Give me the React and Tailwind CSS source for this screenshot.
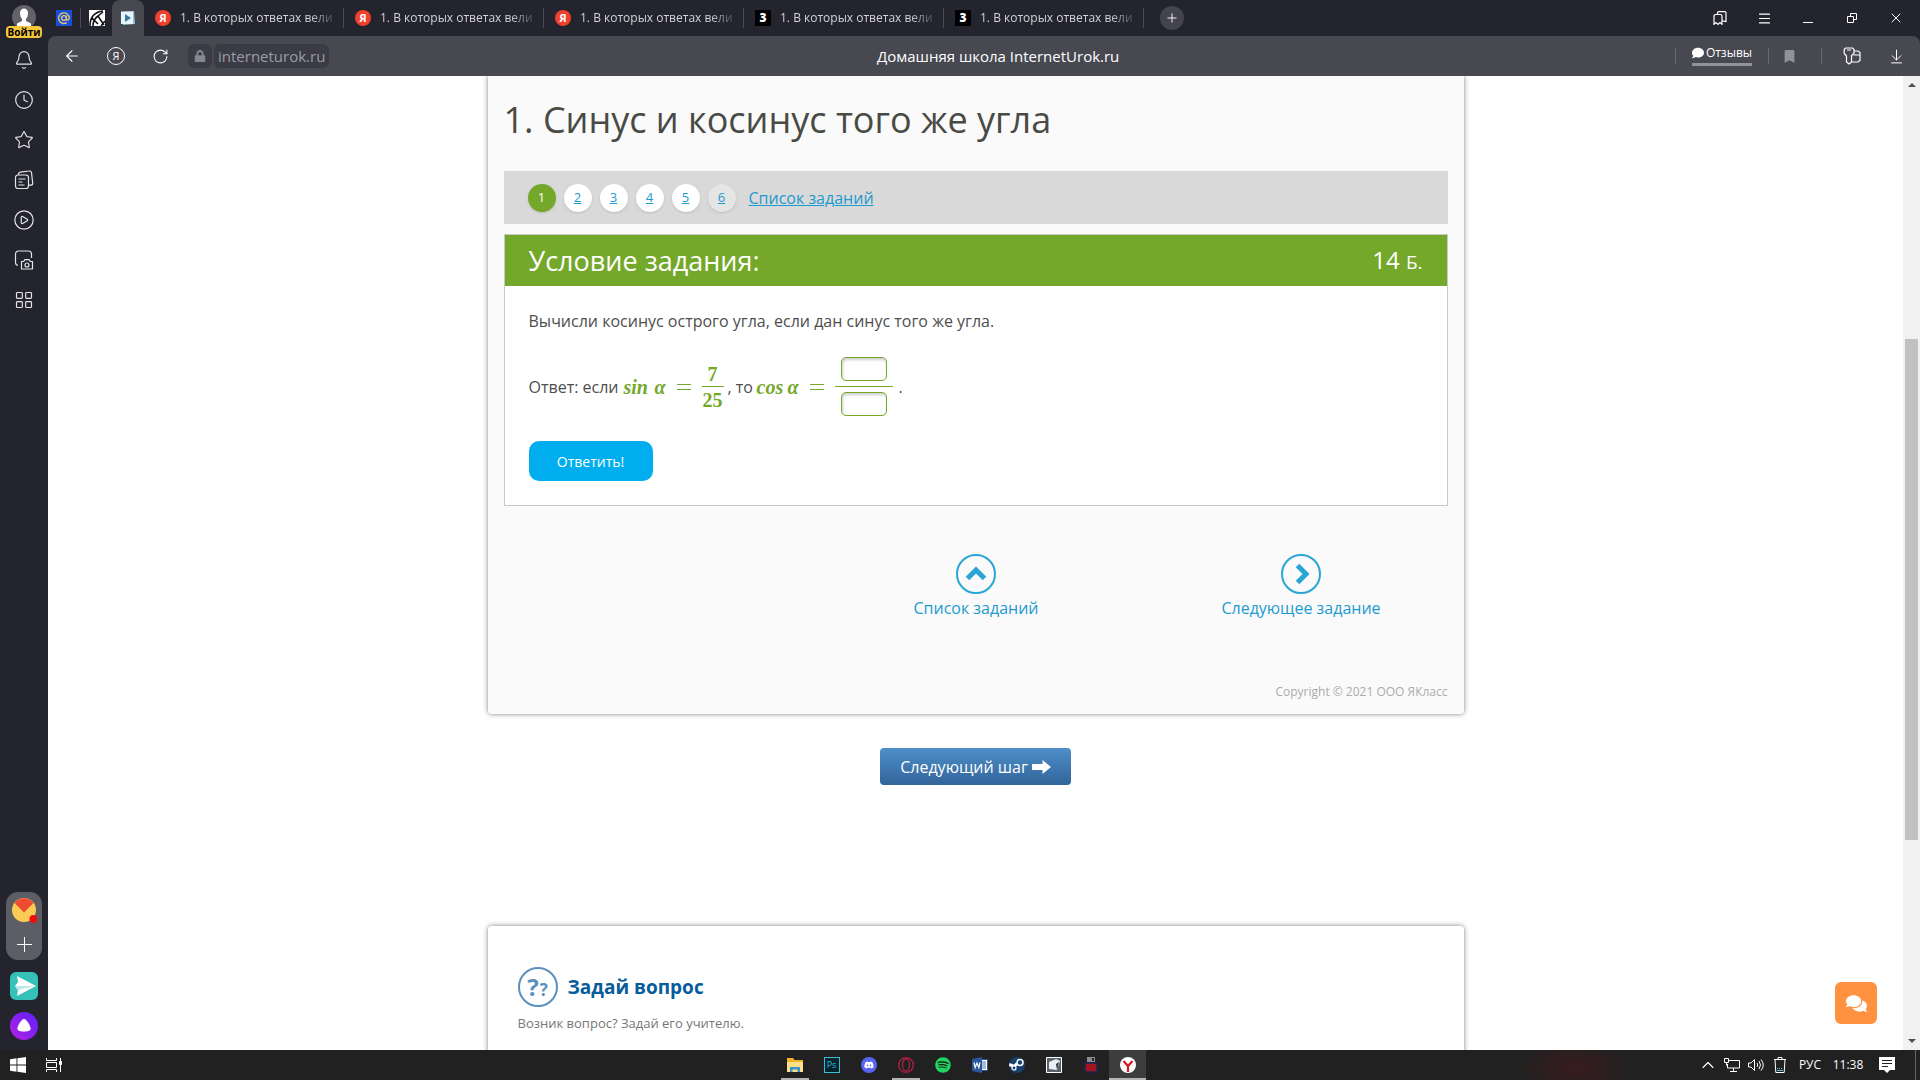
import {
  ArrowDownToLine,
  ArrowLeft,
  Bell,
  ChevronUp,
  CirclePlay,
  Clock,
  LayoutGrid,
  Menu,
  Plus,
  RotateCw,
  Star,
  X,
} from "lucide-react";
import { FaBookmark, FaComment, FaComments, FaDiscord, FaLock, FaOpera, FaSpotify, FaSteam } from "react-icons/fa";

const tabs = [
  { id: 1, kind: "yandex" },
  { id: 2, kind: "yandex" },
  { id: 3, kind: "yandex" },
  { id: 4, kind: "znanija" },
  { id: 5, kind: "znanija" },
];

// Browser side panel icons
const NotesIcon = () => (
  <svg viewBox="0 0 20 20" className="size-5" fill="none" stroke="currentColor" strokeWidth="1.2">
    <rect x="1.5" y="5" width="13" height="13.5" rx="2.5" />
    <path d="M4.5 5V4a2 2 0 0 1 1.700-1.800l9-1.200a2 2 0 0 1 2.300 1.700l1.200 10.300a2 2 0 0 1-1.700 2.200H14.500M4.500 9h7M4.500 12h4M4.500 15h6" />
  </svg>
);

const ScreenshotIcon = () => (
  <svg viewBox="0 0 20 20" className="size-5" fill="none" stroke="currentColor" strokeWidth="1.2">
    <path d="M4 15.5a3 3 0 0 1-2.5-3V4a3 3 0 0 1 3-3h10a3 3 0 0 1 3 3v4" />
    <path d="M7.5 11.5h2.2l1.2-1.8h4.2l1.2 1.8h2.2v7.5h-11z" strokeLinejoin="round" />
    <circle cx="13" cy="15" r="2" />
  </svg>
);

const sideItems = [
  { label: "Уведомления", icon: <Bell size={20} strokeWidth={1.4} /> },
  { label: "История", icon: <Clock size={20} strokeWidth={1.4} /> },
  { label: "Избранное", icon: <Star size={20} strokeWidth={1.4} /> },
  { label: "Коллекции", icon: <NotesIcon /> },
  { label: "Видео", icon: <CirclePlay size={22} strokeWidth={1.3} /> },
  { label: "Скриншот", icon: <ScreenshotIcon /> },
  { label: "Сервисы", icon: <LayoutGrid size={20} strokeWidth={1.4} /> },
];

const YandexBadge = () => (
  <span className="flex size-4 shrink-0 items-center justify-center rounded-full bg-[#f0402d] text-[11px] font-bold leading-4 text-white">
    Я
  </span>
);

const ZnanijaBadge = () => (
  <span className="flex size-4 shrink-0 items-center justify-center bg-black text-[12px] font-extrabold leading-4 text-white">
    3
  </span>
);

const BrowserTab = ({ kind }) => (
  <button className="flex h-9 w-[200px] items-center pl-[11px]">
    {kind === "yandex" ? <YandexBadge /> : <ZnanijaBadge />}
    <span className="ml-[9px] whitespace-nowrap text-left text-[12px] leading-5 text-[#d3d3d8] [mask-image:linear-gradient(to_right,black_85%,#0003)]">
      1. В которых ответах вели
    </span>
    <span className="ml-auto h-5 w-px bg-[#4a4b55]" />
  </button>
);

const TabBar = () => (
  <div className="flex h-9 shrink-0 items-center bg-[#23242e] text-white">
    <button className="flex h-9 w-8 items-center justify-center" aria-label="Почта">
      <svg viewBox="0 0 16 16" className="size-4">
        <rect width="16" height="16" fill="#1550d8" />
        <g fill="none" stroke="#e8c06a" strokeWidth="1.4">
          <circle cx="8" cy="8" r="2.4" />
          <path d="M10.4 5.6v3.2c0 2 2.8 1.8 2.8-.8a5.3 5.3 0 1 0-2.4 4.6" />
        </g>
      </svg>
    </button>
    <span className="h-5 w-px bg-[#4a4b55]" />
    <button className="flex h-9 w-[31px] items-center justify-center" aria-label="Школа">
      <svg viewBox="0 0 16 16" className="size-4">
        <rect width="16" height="16" fill="#fff" />
        <path d="M1 16C1 8 5 2 14 1M4 16c0-5 2-8 5-10l6 9M9 6l5-4M3 8l6 6M12 16l4-5" stroke="#111" strokeWidth="1.6" fill="none" />
      </svg>
    </button>
    <button className="flex h-9 w-8 items-center justify-center rounded-t-lg bg-[#474850]" aria-label="Домашняя школа">
      <svg viewBox="0 0 16 16" className="size-4">
        <path d="m2 2 12-1 1 13-12 1z" fill="#8cc3dd" />
        <path d="M1 1.5h12v12.5H1z" fill="#e6f3fa" />
        <path d="m5 4 6 4-6 4z" fill="#39789b" />
      </svg>
    </button>
    {tabs.map((tab) => (
      <BrowserTab key={tab.id} kind={tab.kind} />
    ))}
    <button className="ml-4 flex size-6 items-center justify-center rounded-full bg-[#43444d]" aria-label="Новая вкладка">
      <Plus size={14} strokeWidth={1.6} />
    </button>
    <div className="mr-[2px] ml-auto flex">
      <button className="flex h-9 w-11 items-center justify-center" aria-label="Закладки">
        <svg viewBox="0 0 14 14" className="size-[14px]" fill="none" stroke="currentColor" strokeWidth="1.2">
          <path d="M1 13.4V5.2A1.7 1.7 0 0 1 2.7 3.5h4.6A1.7 1.7 0 0 1 9 5.2v8.2l-2-1.8-2 1.8-2-1.8z" />
          <path d="M4.5 3.4V2A1.4 1.4 0 0 1 5.900.6h5.700A1.400 1.400 0 0 1 13 2v8.500L9 9.800" />
        </svg>
      </button>
      <button className="flex h-9 w-11 items-center justify-center" aria-label="Меню">
        <Menu size={15} strokeWidth={1.8} />
      </button>
      <button className="flex h-9 w-11 items-center justify-center" aria-label="Свернуть">
        <svg viewBox="0 0 10 10" className="size-[10px]"><path d="M0 9.5h10" stroke="currentColor" /></svg>
      </button>
      <button className="flex h-9 w-11 items-center justify-center" aria-label="Развернуть">
        <svg viewBox="0 0 10 10" className="size-[10px]" fill="none" stroke="currentColor">
          <path d="M.5 3.500h6v6h-6zM3.500 3.500v-3h6v6h-3" />
        </svg>
      </button>
      <button className="flex h-9 w-11 items-center justify-center" aria-label="Закрыть">
        <X size={16} strokeWidth={1.5} />
      </button>
    </div>
  </div>
);

const Toolbar = () => (
  <div className="bg-[#23242e]">
    <div className="flex h-10 items-center rounded-t-lg bg-[#474850] text-white">
      <button className="flex w-12 justify-center" aria-label="Назад">
        <ArrowLeft size={18} strokeWidth={1.5} />
      </button>
      <button className="flex w-10 justify-center" aria-label="Яндекс">
        <span className="flex size-[18px] items-center justify-center rounded-full border border-white text-[11px] leading-4">Я</span>
      </button>
      <button className="flex w-12 justify-center" aria-label="Обновить">
        <RotateCw size={17} strokeWidth={1.5} />
      </button>
      <span className="ml-1 flex h-6 w-6 items-center justify-center rounded-md bg-[#3a3b45] text-[#85868e]">
        <FaLock size={12} />
      </span>
      <a href="#" className="ml-[2px] flex h-6 items-center rounded-md bg-[#3a3b45] px-1 text-[15px] leading-6 text-[#9a9ba3]">
        interneturok.ru
      </a>
      <span className="flex-1 pr-2 text-center text-[15px] leading-6">Домашняя школа InternetUrok.ru</span>
      <div className="flex items-center">
        <span className="h-4 w-px bg-[#666770]" />
        <a href="#" className="mx-4 mb-1 flex items-center gap-[2px] border-b-3 border-[#92939a] text-[12px] leading-5">
          <FaComment size={12} />
          Отзывы
        </a>
        <span className="h-4 w-px bg-[#666770]" />
        <button className="mr-5 ml-2 flex w-6 justify-center text-[#92939a]" aria-label="В закладки">
          <FaBookmark size={13} />
        </button>
        <span className="h-4 w-px bg-[#666770]" />
        <button className="ml-2 flex w-11 justify-center" aria-label="Пароли">
          <svg viewBox="0 0 18 18" className="size-[18px]" fill="none" stroke="currentColor" strokeWidth="1.2">
            <path d="M3 8.500 1.200 6.500v-4L2.500 1h7L11 2.500v4L8.500 8.500V15L6 17l-2.500-2v-6zM4 3h4" />
            <path d="M11 4h4l2 1.500v8L15 15H9M10.500 8h6.500" />
          </svg>
        </button>
        <button className="mr-[2px] flex w-11 justify-center" aria-label="Загрузки">
          <ArrowDownToLine size={17} strokeWidth={1.4} />
        </button>
      </div>
    </div>
  </div>
);

const Sidebar = () => (
  <aside className="flex w-12 shrink-0 flex-col items-center bg-[#23242e] text-[#e4e4e8]">
    <button className="flex h-10 flex-col items-center pt-[5px]">
      <svg viewBox="0 0 24 24" className="size-6">
        <circle cx="12" cy="12" r="12" fill="#626268" />
        <path d="M8 8c0-6 8-6 8 0 0 3-1 5-2 6v2l5 2.500v2.700a12 12 0 0 1-14 0v-2.700L10 16v-2c-1-1-2-3-2-6z" fill="#fff" />
      </svg>
      <span className="z-10 -mt-[3px] rounded-sm bg-[#f5c63c] px-[2px] text-[10px] font-bold leading-3 text-black">Войти</span>
    </button>
    {sideItems.map((item) => (
      <button key={item.label} className="flex h-10 w-12 items-center justify-center" aria-label={item.label}>
        {item.icon}
      </button>
    ))}
    <div className="mt-auto flex h-[68px] w-9 flex-col items-center justify-between rounded-xl bg-[#5c5d65] pt-[6px] pb-2">
      <button aria-label="Яндекс Почта">
        <svg viewBox="0 0 26 26" className="size-[26px]">
          <circle cx="13" cy="12" r="12" fill="#fccb53" />
          <path d="M3.500 5a12 12 0 0 1 19 0L13 14.500z" fill="#ee4b35" />
          <circle cx="22.500" cy="21" r="4" fill="#f40c0c" />
        </svg>
      </button>
      <button aria-label="Добавить">
        <svg viewBox="0 0 16 16" className="size-4" stroke="#fff">
          <path d="M8.500 1v15M1 8.500h15" />
        </svg>
      </button>
    </div>
    <button className="mt-3" aria-label="Мессенджер">
      <svg viewBox="0 0 28 28" className="size-7">
        <rect width="28" height="28" rx="6" fill="#35c1b8" />
        <path d="m7 4 19 10L7 24l1-6-3-4 3-4z" fill="#fff" />
        <path d="m5 14 21 0L8 18z" fill="#bfe9e6" />
      </svg>
    </button>
    <button className="mt-3 mb-[10px]" aria-label="Алиса">
      <svg viewBox="0 0 28 28" className="size-7">
        <defs>
          <linearGradient id="alice" x1="0" y1="1" x2="1" y2="0">
            <stop stopColor="#b620e8" />
            <stop offset="1" stopColor="#5a22f5" />
          </linearGradient>
        </defs>
        <circle cx="14" cy="14" r="14" fill="url(#alice)" />
        <path d="M14 7c2 0 3.500 2.500 5.500 6 2 4 2 6.500-5.500 6.500S6.500 17 8.500 13c2-3.500 3.500-6 5.500-6z" fill="#fff" />
      </svg>
    </button>
  </aside>
);

const Steps = () => (
  <nav className="flex h-[53px] items-center gap-2 bg-[#d9d9d9] px-6 text-[#1d9ad0]">
    <span className="flex size-7 items-center justify-center rounded-full bg-[#74a82a] text-[13px] text-white shadow-sm">1</span>
    {[2, 3, 4, 5].map((n) => (
      <a key={n} href="#" className="flex size-7 items-center justify-center rounded-full bg-white text-[13px] underline shadow-sm">
        {n}
      </a>
    ))}
    <a href="#" className="flex size-7 items-center justify-center rounded-full bg-[#e5e5e5] text-[13px] underline shadow-sm">
      6
    </a>
    <a href="#" className="ml-[5px] text-[16px] leading-6 underline">
      Список заданий
    </a>
  </nav>
);

const answerInput =
  "block h-6 w-[46px] rounded-[5px] border border-[#74a82a] bg-white px-1 text-center text-sm shadow-[inset_1px_2px_3px_rgba(0,0,0,0.2)] outline-none";

const Func = ({ name }) => (
  <span className="flex w-[78px] items-center whitespace-nowrap font-['Liberation_Serif'] text-[20px] leading-6 text-[#74a82a]">
    <i className="w-[31px] font-bold">{name}</i>
    <i className="w-[22px] font-bold">α</i>
    <svg viewBox="0 0 14 6" className="h-[6px] w-[14px]" stroke="currentColor">
      <path d="M0 .5h14M0 5.500h14" />
    </svg>
  </span>
);

const Formula = () => (
  <div className="mt-6 flex items-center text-[16px] leading-6 text-[#4e4e4e]">
    <span className="w-[95px] whitespace-nowrap">Ответ: если</span>
    <Func name="sin" />
    <span className="w-[22px] text-center font-['Liberation_Serif'] text-[20px] font-bold leading-6 text-[#74a82a]">
      <span className="block">7</span>
      <span className="block border-t border-[#74a82a] pt-px">25</span>
    </span>
    <span className="w-[33px] pl-1 whitespace-nowrap">, то</span>
    <Func name="cos" />
    <span className="flex w-[58px] flex-col items-center">
      <input aria-label="Числитель" className={answerInput} />
      <span className="my-[5px] h-px w-full bg-[#74a82a]" />
      <input aria-label="Знаменатель" className={answerInput} />
    </span>
    <span className="pl-[6px]">.</span>
  </div>
);

const Task = () => (
  <section className="mt-[10px] border border-[#c8c8c8] bg-white">
    <header className="flex h-[51px] items-center justify-between bg-[#74a82a] px-6 text-white">
      <h2 className="text-[27px] leading-9">Условие задания:</h2>
      <span className="text-[24px] leading-9">
        14 <span className="text-[19px]">Б.</span>
      </span>
    </header>
    <div className="px-6 pt-[23px] pb-6">
      <p className="text-[16px] leading-6 text-[#4e4e4e]">Вычисли косинус острого угла, если дан синус того же угла.</p>
      <Formula />
      <button className="mt-[25px] h-10 w-[124px] rounded-[10px] bg-[#00aeef] text-[14px] text-white">Ответить!</button>
    </div>
  </section>
);

const TaskNav = () => (
  <div className="mt-12 grid grid-cols-[310px_325px_325px] text-[16px] leading-6 text-[#1d9ad0]">
    <a href="#" className="col-start-2 flex flex-col items-center gap-[2px]">
      <svg viewBox="0 0 40 40" className="size-10" fill="none" stroke="#29a5d6">
        <circle cx="20" cy="20" r="19" strokeWidth="2" />
        <path d="m11.500 24.500 8.500-8.500 8.500 8.500" strokeWidth="5" />
      </svg>
      Список заданий
    </a>
    <a href="#" className="flex flex-col items-center gap-[2px]">
      <svg viewBox="0 0 40 40" className="size-10" fill="none" stroke="#29a5d6">
        <circle cx="20" cy="20" r="19" strokeWidth="2" />
        <path d="m16.500 11.500 8.500 8.500-8.500 8.500" strokeWidth="5" />
      </svg>
      Следующее задание
    </a>
  </div>
);

const Page = () => (
  <main className="min-w-0 flex-1 overflow-hidden bg-white">
    <article className="mx-auto w-full max-w-[976px] rounded-b-sm bg-[#fafafa] px-4 pt-5 pb-[10px] shadow-[0_0_5px_rgba(0,0,0,0.5)]">
      <h1 className="text-[36px] leading-12 text-[#4a4a45]">1. Синус и косинус того же угла</h1>
      <div className="mt-[27px]">
        <Steps />
      </div>
      <Task />
      <TaskNav />
      <p className="mt-[60px] text-right text-[12px] leading-6 text-[#ababab]">Copyright © 2021 ООО ЯКласс</p>
    </article>

    <div className="mt-[34px] flex justify-center">
      <button className="flex h-[37px] items-center gap-1 rounded-[4px] bg-linear-to-b from-[#4f8fc9] to-[#31659a] px-5 text-[16px] leading-6 text-white">
        Следующий шаг
        <svg viewBox="0 0 19 16" className="h-4 w-[19px]" fill="currentColor">
          <path d="M0 5h10.500V1L19 8l-8.500 7v-4H0z" />
        </svg>
      </button>
    </div>

    <section className="mx-auto mt-[141px] h-60 w-full max-w-[976px] rounded-sm bg-white px-[30px] pt-[41px] shadow-[0_0_5px_rgba(0,0,0,0.5)]">
      <div className="flex items-center gap-[10px]">
        <span className="flex size-10 items-center justify-center gap-px rounded-full border-2 border-[#5b8fbd] font-bold text-[#5b8fbd]">
          <span className="text-[24px] leading-6">?</span>
          <span className="pt-[6px] text-[17px] leading-4">?</span>
        </span>
        <h2 className="text-[19px] font-bold leading-8 text-[#075c9c]">Задай вопрос</h2>
      </div>
      <p className="mt-1 text-[13px] leading-6 text-[#777]">Возник вопрос? Задай его учителю.</p>
    </section>
  </main>
);

const Scrollbar = () => (
  <div className="flex w-[17px] shrink-0 flex-col items-center bg-[#f1f1f1] py-[7px]">
    <svg viewBox="0 0 8 4" className="h-1 w-2"><path d="M0 4 4 0l4 4z" fill="#505050" /></svg>
    <div className="flex w-full flex-1 flex-col items-center">
      <div className="flex-[252]" />
      <div className="w-[13px] flex-[501] bg-[#c1c1c1]" />
      <div className="flex-[199]" />
    </div>
    <svg viewBox="0 0 8 4" className="h-1 w-2"><path d="m0 0 4 4 4-4z" fill="#505050" /></svg>
  </div>
);

const apps = [
  {
    name: "Проводник",
    open: true,
    icon: (
      <svg viewBox="0 0 16 14" className="h-[14px] w-4">
        <path d="M0 0h6l1.500 2H16v12H0z" fill="#f0b429" />
        <path d="M0 4h16v10H0z" fill="#ffdf87" />
        <path d="M3 14V9h10v5h-2.500v-2.500h-5V14z" fill="#3b93c9" />
      </svg>
    ),
  },
  {
    name: "Photoshop",
    icon: (
      <span className="flex size-4 items-center justify-center border border-[#35bdd9] bg-[#06232d] text-[9px] leading-3 text-[#35bdd9]">
        Ps
      </span>
    ),
  },
  {
    name: "Discord",
    icon: (
      <span className="flex size-4 items-center justify-center rounded-full bg-[#5865f2] text-white">
        <FaDiscord size={10} />
      </span>
    ),
  },
  {
    name: "Opera",
    open: true,
    icon: (
      <svg viewBox="0 0 16 16" className="size-4" fill="none" stroke="#a8213f">
        <circle cx="8" cy="8" r="7.300" strokeWidth="1.400" />
        <ellipse cx="8" cy="8" rx="3.500" ry="6" strokeWidth="1.400" />
      </svg>
    ),
  },
  { name: "Spotify", icon: <FaSpotify size={16} className="text-[#1ed760]" /> },
  {
    name: "Word",
    icon: (
      <svg viewBox="0 0 16 16" className="size-4">
        <path d="M8 2.500h7.500v11H8z" fill="#fff" stroke="#2b579a" />
        <path d="M10 5h4M10 7h4M10 9h4M10 11h4" stroke="#2b579a" strokeWidth=".8" />
        <path d="m0 2 10-2v16L0 14z" fill="#2b579a" />
        <path d="m2 5.500 1.200 5L5 6l1.800 4.500L8 5.500" fill="none" stroke="#fff" strokeWidth="1.200" />
      </svg>
    ),
  },
  {
    name: "Steam",
    icon: (
      <svg viewBox="0 0 16 16" className="size-4">
        <circle cx="8" cy="8" r="8" fill="#17406f" />
        <path d="m.2 7.500 5 2L8 6.500" stroke="#fff" strokeWidth="3" fill="none" />
        <circle cx="11" cy="5.500" r="3" fill="#17406f" stroke="#fff" strokeWidth="1.500" />
        <circle cx="5" cy="11" r="2" fill="#17406f" stroke="#fff" strokeWidth="1.200" />
      </svg>
    ),
  },
  {
    name: "Редактор",
    icon: (
      <svg viewBox="0 0 16 16" className="size-4">
        <path d="M.5.500h15v15H.5z" fill="#56616b" stroke="#fff" />
        <path d="m3 5 7-3 4 2-3 9-8-1z" fill="#e9eef2" />
        <path d="m10 7 3-2-2 8z" fill="#28323a" />
      </svg>
    ),
  },
  {
    name: "Дискета",
    icon: (
      <svg viewBox="0 0 14 16" className="h-4 w-[14px]">
        <path d="M3 0h8v5H3z" fill="#8b8b91" />
        <path d="M8 1h2v3H8z" fill="#23242e" />
        <path d="M1 6h12v9H1z" fill="#a01420" stroke="#202052" strokeWidth="1.500" />
      </svg>
    ),
  },
  {
    name: "Яндекс Браузер",
    open: true,
    active: true,
    icon: (
      <svg viewBox="0 0 16 16" className="size-4">
        <circle cx="8" cy="8" r="8" fill="#fff" />
        <path d="m3.500 4 4.500 5 4.500-5M8 9v6" fill="none" stroke="#d41a22" strokeWidth="2.200" />
      </svg>
    ),
  },
];

const Taskbar = () => (
  <footer className="grid h-[30px] shrink-0 grid-cols-[1fr_auto_1fr] bg-[#212121] bg-[radial-gradient(ellipse_60px_30px_at_82%_60%,#391c1e,transparent)] text-white">
    <div className="flex">
      <button className="flex w-9 items-center justify-center" aria-label="Пуск">
        <svg viewBox="0 0 16 16" className="size-4" fill="#fff">
          <path d="m0 2.200 6.500-.9v6.200H0zM7.400 1.200 16 0v7.500H7.400zM0 8.400h6.500v6.300L0 13.800zM7.400 8.400H16V16l-8.600-1.200z" />
        </svg>
      </button>
      <button className="flex w-9 items-center justify-center" aria-label="Представление задач">
        <svg viewBox="0 0 16 16" className="size-4" fill="none" stroke="#fff">
          <path d="M.5 1v2.500h10V1M.5 15v-2.500h10V15M.5 5.500h10v5H.5zM14.500 1v14" />
          <path d="M13.500 4.500h2v3h-2z" fill="#fff" />
        </svg>
      </button>
    </div>
    <div className="flex pl-[2px]">
      {apps.map((app) => (
        <button
          key={app.name}
          aria-label={app.name}
          className={`flex w-[37px] flex-col items-center ${app.active ? "bg-[#3d3d3d]" : ""}`}
        >
          <span className="flex flex-1 items-center pt-[2px]">{app.icon}</span>
          <span className={`h-[2px] ${app.active ? "w-full" : "w-7"} ${app.open ? "bg-[#b5b5b5]" : ""}`} />
        </button>
      ))}
    </div>
    <div className="flex items-center justify-end text-[12px] leading-4">
      <button className="flex w-6 justify-center" aria-label="Скрытые значки">
        <ChevronUp size={20} strokeWidth={1.3} />
      </button>
      <svg viewBox="0 0 16 14" className="mx-1 h-[14px] w-4" fill="none" stroke="#fff">
        <path d="M5 2.500h10.500v7.500H3.500V6M9.500 10v3M6 13.500h7M.5.500h4v4h-4zM2.500 4.500v3" />
      </svg>
      <svg viewBox="0 0 16 14" className="mx-1 h-[14px] w-4" fill="none" stroke="#fff">
        <path d="M.5 5h2.500l3.500-3.500v11L3 9H.5zM9 5q1.500 2 0 4M11 3q3 4 0 8M13 1.500q4.500 5.500 0 11" />
      </svg>
      <svg viewBox="0 0 14 16" className="mx-[5px] h-4 w-[14px]" fill="none" stroke="#fff">
        <path d="M1 2.500h12M5 2.500v-2h4v2M2 2.500l.8 13h8.400l.8-13" />
        <path d="M4 11.500h1m1 0h1m1 0h1M4 13.500h6" stroke="#5fb9d8" />
      </svg>
      <span className="w-9 text-center">РУС</span>
      <time className="w-10 text-center">11:38</time>
      <button className="ml-[11px] mr-5 flex" aria-label="Уведомления">
        <svg viewBox="0 0 16 16" className="size-4">
          <path d="M0 0h16v13h-5l-3 3-3-3H0z" fill="#fff" />
          <path d="M3 3.500h10M3 6.500h10M3 9.500h6" stroke="#212121" />
        </svg>
      </button>
      <span className="mr-1 h-full w-px bg-[#666]" />
    </div>
  </footer>
);

const App = () => {
  return (
    <div className="relative flex h-screen flex-col overflow-hidden font-['Open_Sans',sans-serif]">
      <div className="flex min-h-0 flex-1">
        <Sidebar />
        <div className="flex min-w-0 flex-1 flex-col">
          <TabBar />
          <Toolbar />
          <div className="flex min-h-0 flex-1">
            <Page />
            <Scrollbar />
          </div>
        </div>
      </div>
      <Taskbar />

      {/* Support chat */}
      <button
        className="absolute right-[43px] bottom-14 flex size-[42px] items-center justify-center rounded-md bg-[#ff9240] text-white"
        aria-label="Чат"
      >
        <FaComments size={21} />
      </button>
    </div>
  );
};

export default App;
